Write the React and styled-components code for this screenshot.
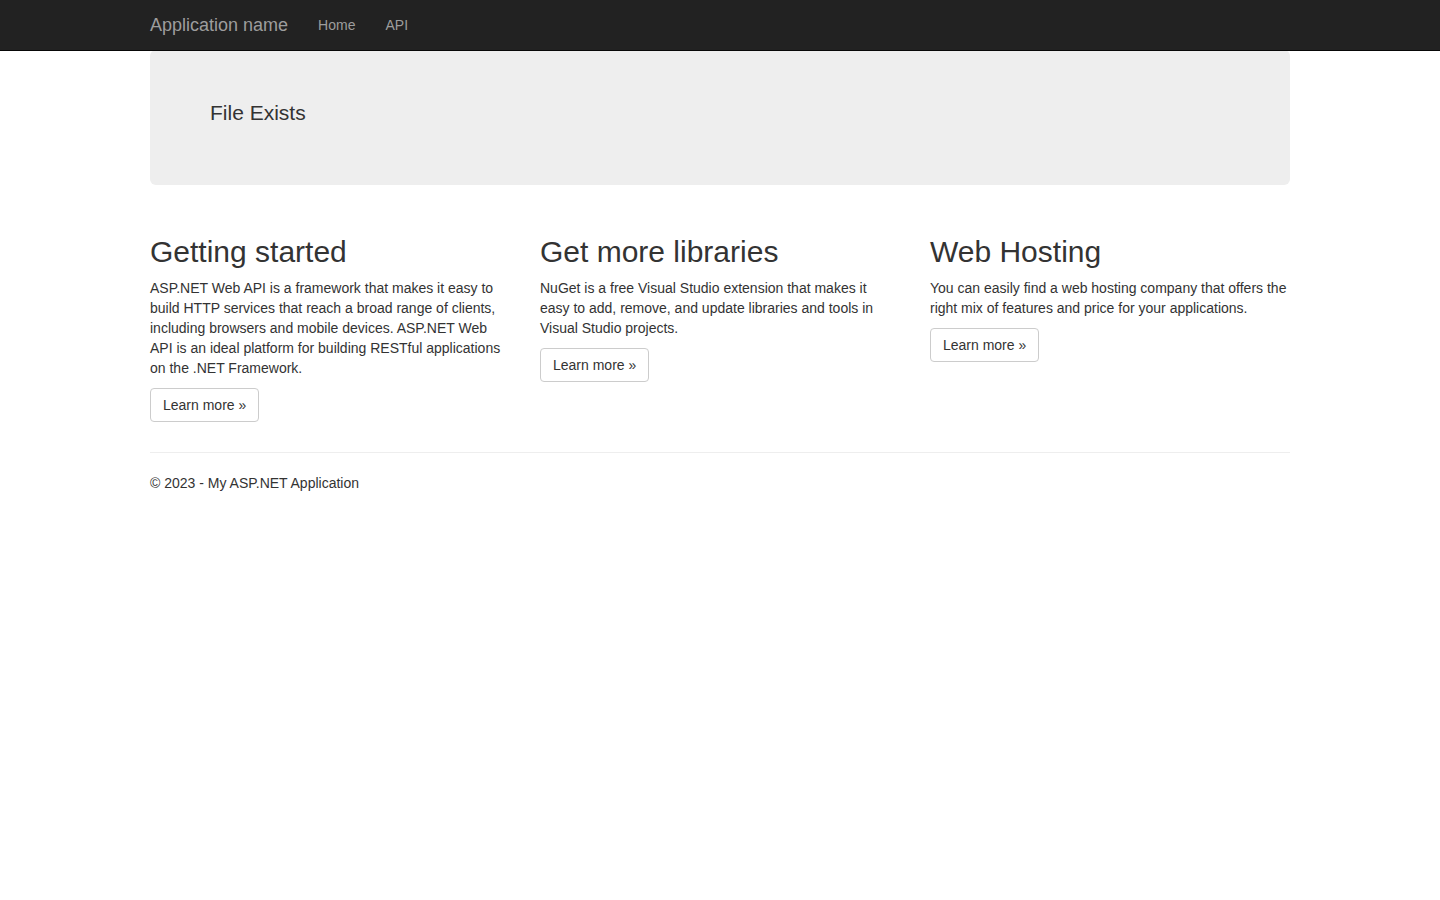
import React from 'react'
import styled, { createGlobalStyle } from 'styled-components'

const GlobalStyle = createGlobalStyle`
    * {
        box-sizing: border-box;
    }
    body {
        margin: 0;
        padding-top: 50px;
        font-family: "Liberation Sans", Arial, Helvetica, sans-serif;
        font-size: 14px;
        line-height: 20px;
        color: #333;
        background-color: #fff;
    }
`;

const columns = [
    {
        title: 'Getting started',
        text: 'ASP.NET Web API is a framework that makes it easy to build HTTP services that reach a broad range of clients, including browsers and mobile devices. ASP.NET Web API is an ideal platform for building RESTful applications on the .NET Framework.',
    },
    {
        title: 'Get more libraries',
        text: 'NuGet is a free Visual Studio extension that makes it easy to add, remove, and update libraries and tools in Visual Studio projects.',
    },
    {
        title: 'Web Hosting',
        text: 'You can easily find a web hosting company that offers the right mix of features and price for your applications.',
    },
]

function App() {
    return (
        <>
            <GlobalStyle />
            <Navbar>
                <NavContainer>
                    <Brand href="#">Application name</Brand>
                    <NavLinks>
                        <NavLink href="#">Home</NavLink>
                        <NavLink href="#">API</NavLink>
                    </NavLinks>
                </NavContainer>
            </Navbar>
            <Container>
                <Jumbotron>
                    <JumboText>File Exists</JumboText>
                </Jumbotron>
                <Row>
                    {columns.map((c) => (
                        <Column key={c.title}>
                            <ColTitle>{c.title}</ColTitle>
                            <ColText>{c.text}</ColText>
                            <ColText>
                                <Button href="#">Learn more &raquo;</Button>
                            </ColText>
                        </Column>
                    ))}
                </Row>
                <Divider />
                <Footer>
                    <p>&copy; 2023 - My ASP.NET Application</p>
                </Footer>
            </Container>
        </>
    )
}

export default App

const Navbar = styled.nav`
    position: fixed;
    top: 0;
    left: 0;
    right: 0;
    height: 51px;
    background-color: #222;
    border-bottom: 1px solid #080808;
    z-index: 10;
`;
const NavContainer = styled.div`
    width: 1170px;
    margin: 0 auto;
    padding: 0 15px;
    display: flex;
    align-items: center;
`;
const Brand = styled.a`
    display: block;
    height: 50px;
    padding: 15px;
    margin-left: -15px;
    font-size: 18px;
    line-height: 20px;
    color: #9d9d9d;
    text-decoration: none;
`;
const NavLinks = styled.div`
    display: flex;
`;
const NavLink = styled.a`
    display: block;
    padding: 15px;
    line-height: 20px;
    font-size: 14px;
    color: #9d9d9d;
    text-decoration: none;
`;
const Container = styled.div`
    width: 1170px;
    margin: 0 auto;
    padding: 0 15px;
`;
const Jumbotron = styled.div`
    padding: 48px 60px;
    margin-bottom: 30px;
    background-color: #eee;
    border-radius: 6px;
`;
const JumboText = styled.p`
    margin: 0 0 9px;
    font-size: 21px;
    line-height: 30px;
    font-weight: 200;
`;
const Row = styled.div`
    display: flex;
    margin: 0 -15px;
`;
const Column = styled.div`
    width: 33.3333%;
    padding: 0 15px;
`;
const ColTitle = styled.h2`
    margin: 20px 0 10px;
    font-size: 30px;
    font-weight: 500;
    line-height: 33px;
`;
const ColText = styled.p`
    margin: 0 0 10px;
`;
const Button = styled.a`
    display: inline-block;
    padding: 6px 12px;
    font-size: 14px;
    line-height: 20px;
    color: #333;
    background-color: #fff;
    border: 1px solid #ccc;
    border-radius: 4px;
    text-decoration: none;
`;
const Divider = styled.hr`
    margin: 20px 0;
    border: 0;
    border-top: 1px solid #eee;
`;
const Footer = styled.footer`
    p {
        margin: 0 0 10px;
    }
`;
